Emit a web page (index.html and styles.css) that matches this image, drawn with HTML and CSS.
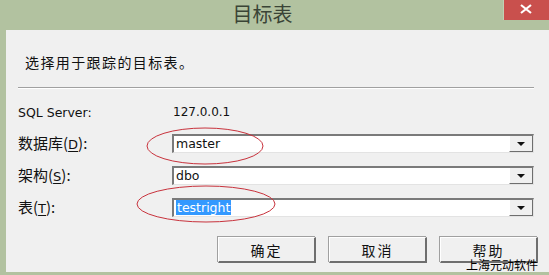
FILE: index.html
```html
<!DOCTYPE html>
<html lang="zh-CN">
<head>
<meta charset="UTF-8">
<title>目标表</title>
<link rel="stylesheet" href="styles.css">
</head>
<body>
<div class="window">
  <div class="titlebar">
    <div class="title">目标表</div>
    <svg class="close-btn" width="46" height="20" viewBox="0 0 46 20">
      <rect x="0" y="0" width="1" height="20" fill="#c2d0b4"/>
      <rect x="1" y="0" width="45" height="20" fill="#c9504d"/>
      <path d="M18 5 L28 13 M28 5 L18 13" stroke="#fff" stroke-width="2.2"/>
    </svg>
  </div>
  <div class="content">
    <p class="intro">选择用于跟踪的目标表。</p>
    <div class="divider"></div>

    <div class="fields">
      <span class="label">SQL Server:</span>
      <span class="value">127.0.0.1</span>

      <span class="label cjk">数据库(<u>D</u>):</span>
      <div class="combo"><span class="text">master</span><span class="arrow"></span></div>

      <span class="label cjk">架构(<u>S</u>):</span>
      <div class="combo"><span class="text">dbo</span><span class="arrow"></span></div>

      <span class="label cjk">表(<u>T</u>):</span>
      <div class="combo"><span class="text"><span class="selected">testright</span></span><span class="arrow"></span></div>
    </div>

    <div class="buttons">
      <button type="button">确定</button>
      <button type="button">取消</button>
      <button type="button">帮助</button>
    </div>
    <span class="watermark">上海元动软件</span>
  </div>

  <svg class="marks" width="549" height="275" viewBox="0 0 549 275">
    <ellipse cx="205" cy="146" rx="58" ry="18" fill="none" stroke="#c8323c" stroke-width="1"/>
    <ellipse cx="206" cy="204" rx="69" ry="18" fill="none" stroke="#c8323c" stroke-width="1"/>
  </svg>
</div>
</body>
</html>
```

FILE: styles.css
```css
body {
  margin: 0;
  font-family: "DejaVu Sans", "Noto Sans CJK SC", sans-serif;
}
.window {
  position: relative;
  width: 549px;
  height: 275px;
  background: #b2c2a0;
  overflow: hidden;
}
.titlebar {
  height: 30px;
  display: flex;
  align-items: flex-start;
}
.title {
  flex: 1;
  text-align: center;
  padding-left: 22px;
  padding-top: 2px;
  font-family: "Noto Sans CJK SC", sans-serif;
  font-size: 20px;
  line-height: 24px;
  color: #3a4436;
}
.close-btn {
  flex: none;
  display: block;
}
.content {
  position: relative;
  margin-left: 6px;
  height: 242px;
  background: #f0f0f0;
}
.intro {
  margin: 0;
  padding: 22px 0 0 19px;
  font-family: "Noto Sans CJK SC", sans-serif;
  font-size: 14px;
  line-height: 20px;
  letter-spacing: 1.4px;
  color: #111;
}
.divider {
  margin: 15px 15px 0 12px;
  border-top: 1px solid #a0a0a0;
  border-bottom: 1px solid #fff;
}
.fields {
  display: grid;
  grid-template-columns: 154px 362px;
  row-gap: 11px;
  margin: 14px 0 0 12px;
  align-items: center;
}
.label, .value {
  font-size: 12px;
  line-height: 19px;
  color: #111;
}
.label {
  font-size: 12.5px;
}
.label u {
  text-underline-offset: 2px;
}
.label.cjk {
  font-family: "Noto Sans CJK SC", sans-serif;
  font-size: 15px;
}
.label.cjk u {
  font-family: "DejaVu Sans", sans-serif;
  font-size: 13px;
}
.value {
  padding-left: 1px;
}
.combo {
  height: 19px;
  display: flex;
  background: #fff;
  border-top: 2px solid #7a7a7a;
  border-left: 2px solid #7a7a7a;
  border-bottom: 1px solid #e3e3e3;
  border-right: 1px solid #e3e3e3;
  box-sizing: border-box;
}
.combo .text {
  flex: 1;
  padding-left: 2px;
  font-size: 12.5px;
  line-height: 16px;
  color: #111;
}
.selected {
  background: #3399ff;
  color: #fff;
  padding: 0 1px;
}
.arrow {
  width: 22px;
  background: #f0f0f0;
  border-left: 1px solid #fff;
  border-right: 1px solid #6e6e6e;
  border-bottom: 1px solid #6e6e6e;
  position: relative;
}
.arrow::after {
  content: "";
  position: absolute;
  left: 7px;
  top: 6px;
  border-left: 4px solid transparent;
  border-right: 4px solid transparent;
  border-top: 4px solid #111;
}
.buttons {
  display: flex;
  gap: 13px;
  margin: 19px 0 0 212px;
}
.buttons button {
  width: 98px;
  height: 26px;
  padding: 0;
  background: #f0f0f0;
  border-top: 1px solid #fff;
  border-left: 1px solid #fff;
  border-right: 2px solid #6e6e6e;
  border-bottom: 2px solid #6e6e6e;
  box-shadow: -1px -1px 0 #a0a0a0;
  font-family: "Noto Sans CJK SC", sans-serif;
  font-size: 14px;
  line-height: 18px;
  letter-spacing: 2px;
  color: #111;
}
.watermark {
  position: absolute;
  right: 11px;
  bottom: 0;
  font-family: "Noto Sans CJK SC", sans-serif;
  font-size: 12px;
  line-height: 14px;
  color: #000;
}
.marks {
  position: absolute;
  left: 0;
  top: 0;
  pointer-events: none;
}
```
